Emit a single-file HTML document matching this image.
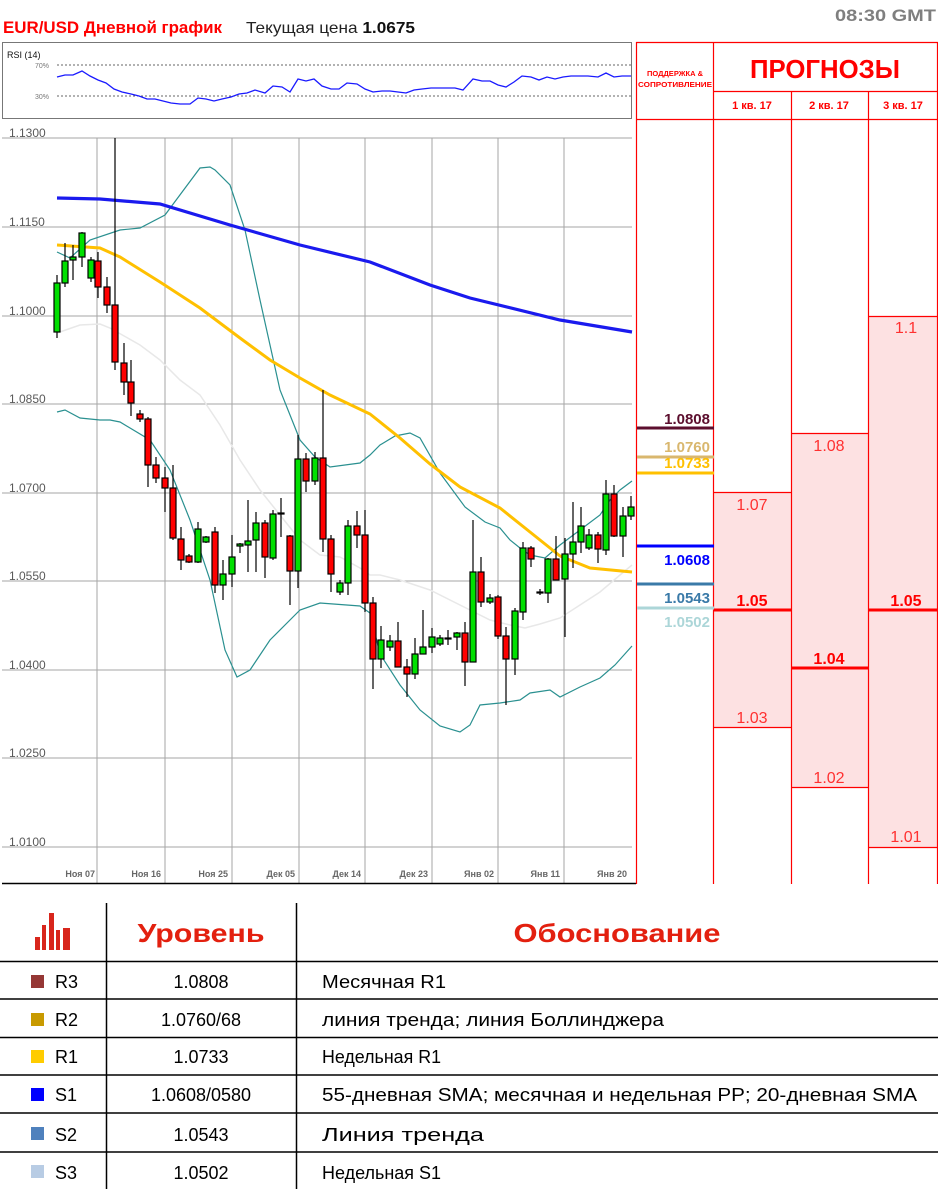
<!DOCTYPE html>
<html><head><meta charset="utf-8"><style>
html,body{margin:0;padding:0;background:#fff;}
svg{display:block;font-family:"Liberation Sans","DejaVu Sans",sans-serif;}
</style></head><body>
<svg width="938" height="1189" viewBox="0 0 938 1189" xmlns="http://www.w3.org/2000/svg">
<rect width="938" height="1189" fill="#fff"/>
<!-- header -->
<text x="3" y="33" font-size="17" font-weight="bold" fill="#ff0000" textLength="219" lengthAdjust="spacingAndGlyphs">EUR/USD Дневной график</text>
<text x="246" y="33" font-size="16" fill="#222" textLength="169" lengthAdjust="spacingAndGlyphs">Текущая цена <tspan font-weight="bold" fill="#111">1.0675</tspan></text>
<text x="936" y="21" font-size="17" font-weight="bold" fill="#7f7f7f" text-anchor="end" textLength="101" lengthAdjust="spacingAndGlyphs">08:30 GMT</text>

<!-- RSI -->
<rect x="2.5" y="42.5" width="629" height="76" fill="#fff" stroke="#777" stroke-width="1"/>
<text x="7" y="58" font-size="9" fill="#111">RSI (14)</text>
<text x="35" y="68" font-size="7" fill="#777">70%</text>
<text x="35" y="99" font-size="7" fill="#777">30%</text>
<line x1="57" y1="65" x2="631" y2="65" stroke="#666" stroke-dasharray="2,2"/>
<line x1="57" y1="96" x2="631" y2="96" stroke="#666" stroke-dasharray="2,2"/>
<polyline fill="none" stroke="#1a1aff" stroke-width="1.3" points="57,77 65,75 73,75 82,71 90,76 98,80 106,83 114,89 122,92 131,94 139,96 147,99 155,99 163,101 171,103 180,104 190,104 198,98 206,99 214,101 222,99 231,97 239,94 247,93 255,90 265,93 273,86 282,87 290,92 298,79 306,81 314,79 322,86 331,89 339,89 347,83 357,84 365,89 373,92 382,91 390,91 398,92 406,93 414,90 422,89 431,88 439,88 447,88 455,88 463,90 473,79 482,81 490,81 498,85 506,87 514,82 522,76 531,77 539,80 547,77 555,79 563,77 571,76 580,76 588,76 598,77 606,73 614,77 622,76 631,76"/>

<!-- main chart grid -->
<g stroke="#a6a6a6" stroke-width="1">
<line x1="2" y1="138" x2="632" y2="138"/><line x1="2" y1="227" x2="632" y2="227"/><line x1="2" y1="316" x2="632" y2="316"/><line x1="2" y1="404" x2="632" y2="404"/><line x1="2" y1="493" x2="632" y2="493"/><line x1="2" y1="581" x2="632" y2="581"/><line x1="2" y1="670" x2="632" y2="670"/><line x1="2" y1="758" x2="632" y2="758"/><line x1="2" y1="847" x2="632" y2="847"/>
<line x1="97" y1="138" x2="97" y2="883"/><line x1="165" y1="138" x2="165" y2="883"/><line x1="232" y1="138" x2="232" y2="883"/><line x1="299" y1="138" x2="299" y2="883"/><line x1="365" y1="138" x2="365" y2="883"/><line x1="432" y1="138" x2="432" y2="883"/><line x1="498" y1="138" x2="498" y2="883"/><line x1="564" y1="138" x2="564" y2="883"/>
</g>
<line x1="2" y1="883.5" x2="636" y2="883.5" stroke="#000" stroke-width="1.5"/>
<g font-size="12" fill="#595959">
<text x="9" y="137">1.1300</text><text x="9" y="226">1.1150</text><text x="9" y="315">1.1000</text><text x="9" y="403">1.0850</text><text x="9" y="492">1.0700</text><text x="9" y="580">1.0550</text><text x="9" y="669">1.0400</text><text x="9" y="757">1.0250</text><text x="9" y="846">1.0100</text>
</g>
<g font-size="9" font-weight="bold" fill="#666" text-anchor="end">
<text x="95" y="877">Ноя 07</text><text x="161" y="877">Ноя 16</text><text x="228" y="877">Ноя 25</text><text x="295" y="877">Дек 05</text><text x="361" y="877">Дек 14</text><text x="428" y="877">Дек 23</text><text x="494" y="877">Янв 02</text><text x="560" y="877">Янв 11</text><text x="627" y="877">Янв 20</text>
</g>

<!-- indicators -->
<polyline fill="none" stroke="#e8e8e8" stroke-width="1.5" points="57,333 80,325 100,324 110,328 140,345 160,360 180,380 200,395 220,425 240,460 260,490 280,515 300,540 320,555 340,557 360,568 370,575 380,575 400,580 430,590 460,605 490,620 510,625 525,628 540,624 560,618 580,605 600,592 620,575 632,565"/>
<polyline fill="none" stroke="#2a9090" stroke-width="1.2" points="57,252 70,258 90,240 120,230 140,228 165,215 200,168 210,167 215,170 230,185 245,230 260,300 280,390 300,440 315,457 330,467 360,463 370,455 380,445 395,436 410,433 420,438 440,473 465,507 485,522 500,528 510,540 520,548 530,555 545,558 560,545 580,530 600,515 610,500 620,490 632,481"/>
<polyline fill="none" stroke="#2a9090" stroke-width="1.2" points="57,412 65,410 80,418 100,420 110,420 120,422 150,440 170,470 190,520 210,580 225,650 237,677 250,670 270,640 300,610 320,603 360,606 370,613 380,654 400,685 420,710 440,726 460,732 470,725 480,705 500,703 520,700 530,693 550,690 560,697 580,687 600,678 615,665 632,646"/>
<polyline fill="none" stroke="#1a1aee" stroke-width="3.2" points="57,198 100,199 160,204 230,225 300,245 370,262 430,285 470,298 560,320 632,332"/>
<polyline fill="none" stroke="#ffc000" stroke-width="3" points="57,245 100,248 120,257 160,282 200,308 240,338 270,360 300,378 330,395 370,414 400,438 430,464 460,487 500,508 530,532 560,556 590,568 632,572"/>

<!-- candles -->
<g stroke="#000" stroke-width="1.2">
<line x1="57" y1="275" x2="57" y2="338"/><rect x="54" y="283" width="6" height="49" fill="#00e000"/>
<line x1="65" y1="243" x2="65" y2="287"/><rect x="62" y="261" width="6" height="22" fill="#00e000"/>
<line x1="73" y1="245" x2="73" y2="280"/><rect x="70" y="257" width="6" height="3" fill="#00e000"/>
<line x1="82" y1="232" x2="82" y2="267"/><rect x="79" y="233" width="6" height="24" fill="#00e000"/>
<line x1="91" y1="257" x2="91" y2="282"/><rect x="88" y="260" width="6" height="18" fill="#00e000"/>
<line x1="98" y1="252" x2="98" y2="298"/><rect x="95" y="261" width="6" height="26" fill="#ff0000"/>
<line x1="107" y1="277" x2="107" y2="313"/><rect x="104" y="287" width="6" height="18" fill="#ff0000"/>
<line x1="115" y1="138" x2="115" y2="370"/><rect x="112" y="305" width="6" height="57" fill="#ff0000"/>
<line x1="124" y1="343" x2="124" y2="395"/><rect x="121" y="363" width="6" height="19" fill="#ff0000"/>
<line x1="131" y1="360" x2="131" y2="416"/><rect x="128" y="382" width="6" height="21" fill="#ff0000"/>
<line x1="140" y1="410" x2="140" y2="422"/><rect x="137" y="414" width="6" height="5" fill="#ff0000"/>
<line x1="148" y1="417" x2="148" y2="487"/><rect x="145" y="419" width="6" height="46" fill="#ff0000"/>
<line x1="156" y1="457" x2="156" y2="483"/><rect x="153" y="465" width="6" height="13" fill="#ff0000"/>
<line x1="165" y1="467" x2="165" y2="512"/><rect x="162" y="478" width="6" height="10" fill="#ff0000"/>
<line x1="173" y1="465" x2="173" y2="540"/><rect x="170" y="488" width="6" height="50" fill="#ff0000"/>
<line x1="181" y1="527" x2="181" y2="570"/><rect x="178" y="539" width="6" height="21" fill="#ff0000"/>
<line x1="189" y1="554" x2="189" y2="563"/><rect x="186" y="556" width="6" height="6" fill="#ff0000"/>
<line x1="198" y1="522" x2="198" y2="563"/><rect x="195" y="529" width="6" height="33" fill="#00e000"/>
<line x1="206" y1="536" x2="206" y2="543"/><rect x="203" y="537" width="6" height="5" fill="#00e000"/>
<line x1="215" y1="527" x2="215" y2="593"/><rect x="212" y="532" width="6" height="53" fill="#ff0000"/>
<line x1="223" y1="560" x2="223" y2="600"/><rect x="220" y="574" width="6" height="11" fill="#00e000"/>
<line x1="232" y1="535" x2="232" y2="587"/><rect x="229" y="557" width="6" height="17" fill="#00e000"/>
<line x1="240" y1="543" x2="240" y2="553"/><rect x="237" y="544" width="6" height="2" fill="#00e000"/>
<line x1="248" y1="500" x2="248" y2="572"/><rect x="245" y="541" width="6" height="4" fill="#00e000"/>
<line x1="256" y1="512" x2="256" y2="572"/><rect x="253" y="523" width="6" height="17" fill="#00e000"/>
<line x1="265" y1="520" x2="265" y2="578"/><rect x="262" y="523" width="6" height="34" fill="#ff0000"/>
<line x1="273" y1="510" x2="273" y2="560"/><rect x="270" y="514" width="6" height="44" fill="#00e000"/>
<line x1="281" y1="498" x2="281" y2="537"/><rect x="278" y="513" width="6" height="1" fill="#00e000"/>
<line x1="290" y1="535" x2="290" y2="605"/><rect x="287" y="536" width="6" height="35" fill="#ff0000"/>
<line x1="298" y1="435" x2="298" y2="588"/><rect x="295" y="459" width="6" height="112" fill="#00e000"/>
<line x1="306" y1="453" x2="306" y2="492"/><rect x="303" y="459" width="6" height="22" fill="#ff0000"/>
<line x1="315" y1="452" x2="315" y2="485"/><rect x="312" y="458" width="6" height="23" fill="#00e000"/>
<line x1="323" y1="390" x2="323" y2="552"/><rect x="320" y="458" width="6" height="81" fill="#ff0000"/>
<line x1="331" y1="535" x2="331" y2="592"/><rect x="328" y="539" width="6" height="35" fill="#ff0000"/>
<line x1="340" y1="580" x2="340" y2="595"/><rect x="337" y="583" width="6" height="9" fill="#00e000"/>
<line x1="348" y1="520" x2="348" y2="595"/><rect x="345" y="526" width="6" height="57" fill="#00e000"/>
<line x1="357" y1="511" x2="357" y2="548"/><rect x="354" y="526" width="6" height="9" fill="#ff0000"/>
<line x1="365" y1="510" x2="365" y2="612"/><rect x="362" y="535" width="6" height="68" fill="#ff0000"/>
<line x1="373" y1="597" x2="373" y2="689"/><rect x="370" y="603" width="6" height="56" fill="#ff0000"/>
<line x1="381" y1="626" x2="381" y2="668"/><rect x="378" y="640" width="6" height="19" fill="#00e000"/>
<line x1="390" y1="635" x2="390" y2="651"/><rect x="387" y="641" width="6" height="6" fill="#00e000"/>
<line x1="398" y1="622" x2="398" y2="667"/><rect x="395" y="641" width="6" height="26" fill="#ff0000"/>
<line x1="407" y1="659" x2="407" y2="697"/><rect x="404" y="667" width="6" height="7" fill="#ff0000"/>
<line x1="415" y1="638" x2="415" y2="679"/><rect x="412" y="654" width="6" height="20" fill="#00e000"/>
<line x1="423" y1="610" x2="423" y2="653"/><rect x="420" y="647" width="6" height="7" fill="#00e000"/>
<line x1="432" y1="628" x2="432" y2="653"/><rect x="429" y="637" width="6" height="10" fill="#00e000"/>
<line x1="440" y1="635" x2="440" y2="646"/><rect x="437" y="638" width="6" height="6" fill="#00e000"/>
<line x1="448" y1="630" x2="448" y2="645"/><rect x="445" y="638" width="6" height="1" fill="#00e000"/>
<line x1="457" y1="632" x2="457" y2="650"/><rect x="454" y="633" width="6" height="4" fill="#00e000"/>
<line x1="465" y1="622" x2="465" y2="686"/><rect x="462" y="633" width="6" height="29" fill="#ff0000"/>
<line x1="473" y1="520" x2="473" y2="662"/><rect x="470" y="572" width="6" height="90" fill="#00e000"/>
<line x1="481" y1="557" x2="481" y2="607"/><rect x="478" y="572" width="6" height="30" fill="#ff0000"/>
<line x1="490" y1="594" x2="490" y2="604"/><rect x="487" y="598" width="6" height="4" fill="#00e000"/>
<line x1="498" y1="595" x2="498" y2="639"/><rect x="495" y="597" width="6" height="39" fill="#ff0000"/>
<line x1="506" y1="627" x2="506" y2="705"/><rect x="503" y="636" width="6" height="23" fill="#ff0000"/>
<line x1="515" y1="608" x2="515" y2="675"/><rect x="512" y="611" width="6" height="48" fill="#00e000"/>
<line x1="523" y1="542" x2="523" y2="620"/><rect x="520" y="548" width="6" height="64" fill="#00e000"/>
<line x1="531" y1="546" x2="531" y2="567"/><rect x="528" y="548" width="6" height="11" fill="#ff0000"/>
<line x1="540" y1="589" x2="540" y2="595"/><rect x="537" y="592" width="6" height="1" fill="#00e000"/>
<line x1="548" y1="558" x2="548" y2="603"/><rect x="545" y="559" width="6" height="34" fill="#00e000"/>
<line x1="556" y1="536" x2="556" y2="580"/><rect x="553" y="559" width="6" height="21" fill="#ff0000"/>
<line x1="565" y1="538" x2="565" y2="637"/><rect x="562" y="554" width="6" height="25" fill="#00e000"/>
<line x1="573" y1="502" x2="573" y2="568"/><rect x="570" y="542" width="6" height="12" fill="#00e000"/>
<line x1="581" y1="507" x2="581" y2="553"/><rect x="578" y="526" width="6" height="16" fill="#00e000"/>
<line x1="589" y1="529" x2="589" y2="550"/><rect x="586" y="535" width="6" height="13" fill="#00e000"/>
<line x1="598" y1="532" x2="598" y2="563"/><rect x="595" y="535" width="6" height="14" fill="#ff0000"/>
<line x1="606" y1="480" x2="606" y2="555"/><rect x="603" y="494" width="6" height="56" fill="#00e000"/>
<line x1="614" y1="485" x2="614" y2="537"/><rect x="611" y="494" width="6" height="42" fill="#ff0000"/>
<line x1="623" y1="507" x2="623" y2="557"/><rect x="620" y="516" width="6" height="20" fill="#00e000"/>
<line x1="631" y1="496" x2="631" y2="520"/><rect x="628" y="507" width="6" height="9" fill="#00e000"/>
</g>

<!-- right forecast panel -->
<rect x="714" y="492" width="77" height="235" fill="#fde1e2"/>
<rect x="791" y="433" width="77" height="354" fill="#fde1e2"/>
<rect x="868" y="316" width="70" height="531" fill="#fde1e2"/>
<g stroke="#ff0000" stroke-width="1.2">
<line x1="636" y1="42.5" x2="938" y2="42.5"/>
<line x1="713" y1="91.5" x2="938" y2="91.5"/>
<line x1="636" y1="119.5" x2="938" y2="119.5"/>
<line x1="636.5" y1="42" x2="636.5" y2="884"/>
<line x1="713.5" y1="42" x2="713.5" y2="884"/>
<line x1="791.5" y1="91" x2="791.5" y2="884"/>
<line x1="868.5" y1="91" x2="868.5" y2="884"/>
<line x1="937.5" y1="42" x2="937.5" y2="884"/>
<line x1="714" y1="492.5" x2="791" y2="492.5"/>
<line x1="714" y1="727.5" x2="791" y2="727.5"/>
<line x1="791" y1="433.5" x2="868" y2="433.5"/>
<line x1="791" y1="787.5" x2="868" y2="787.5"/>
<line x1="868" y1="316.5" x2="938" y2="316.5"/>
<line x1="868" y1="847.5" x2="938" y2="847.5"/>
</g>
<g stroke="#ff0000" stroke-width="3">
<line x1="714" y1="610" x2="791" y2="610"/>
<line x1="791" y1="668" x2="868" y2="668"/>
<line x1="868" y1="610" x2="938" y2="610"/>
</g>
<text x="825" y="78" font-size="26" font-weight="bold" fill="#ff0000" text-anchor="middle" textLength="150" lengthAdjust="spacingAndGlyphs">ПРОГНОЗЫ</text>
<text x="675" y="76" font-size="7.5" font-weight="bold" fill="#ff0000" text-anchor="middle">ПОДДЕРЖКА &amp;</text>
<text x="675" y="87" font-size="7.5" font-weight="bold" fill="#ff0000" text-anchor="middle" textLength="74" lengthAdjust="spacingAndGlyphs">СОПРОТИВЛЕНИЕ</text>
<g font-size="11" font-weight="bold" fill="#ff0000" text-anchor="middle">
<text x="752" y="109">1 кв. 17</text><text x="829" y="109">2 кв. 17</text><text x="903" y="109">3 кв. 17</text>
</g>
<g font-size="16" fill="#ff3030" text-anchor="middle">
<text x="752" y="510">1.07</text><text x="752" y="723">1.03</text>
<text x="829" y="451">1.08</text><text x="829" y="783">1.02</text>
<text x="906" y="333">1.1</text><text x="906" y="842">1.01</text>
</g>
<g font-size="16" font-weight="bold" fill="#ff0000" text-anchor="middle">
<text x="752" y="606">1.05</text><text x="829" y="664">1.04</text><text x="906" y="606">1.05</text>
</g>
<!-- S/R levels -->
<g stroke-width="3">
<line x1="637" y1="428" x2="714" y2="428" stroke="#5c0f2e"/>
<line x1="637" y1="457" x2="714" y2="457" stroke="#d9b76e"/>
<line x1="637" y1="473" x2="714" y2="473" stroke="#ffc000"/>
<line x1="637" y1="546" x2="714" y2="546" stroke="#0000ff"/>
<line x1="637" y1="584" x2="714" y2="584" stroke="#3a7aa8"/>
<line x1="637" y1="608" x2="714" y2="608" stroke="#acd6d8"/>
</g>
<g font-size="15" font-weight="bold" text-anchor="end">
<text x="710" y="424" fill="#5c0f2e">1.0808</text>
<text x="710" y="452" fill="#d9b76e">1.0760</text>
<text x="710" y="468" fill="#ffc000">1.0733</text>
<text x="710" y="565" fill="#0000ff">1.0608</text>
<text x="710" y="603" fill="#3a7aa8">1.0543</text>
<text x="710" y="627" fill="#acd6d8">1.0502</text>
</g>

<!-- bottom table -->
<g fill="#d8261c">
<rect x="35" y="937" width="5" height="13"/><rect x="42" y="925" width="4" height="25"/><rect x="49" y="913" width="5" height="37"/><rect x="56" y="930" width="4" height="20"/><rect x="63" y="928" width="7" height="22"/>
</g>
<text x="201" y="942" font-size="26" font-weight="bold" fill="#e3200f" text-anchor="middle" textLength="127" lengthAdjust="spacingAndGlyphs">Уровень</text>
<text x="617" y="942" font-size="26" font-weight="bold" fill="#e3200f" text-anchor="middle" textLength="207" lengthAdjust="spacingAndGlyphs">Обоснование</text>
<g stroke="#000" stroke-width="1.5">
<line x1="106.5" y1="903" x2="106.5" y2="1189"/>
<line x1="296.5" y1="903" x2="296.5" y2="1189"/>
<line x1="0" y1="961.5" x2="938" y2="961.5"/>
<line x1="0" y1="999" x2="938" y2="999"/>
<line x1="0" y1="1037.5" x2="938" y2="1037.5"/>
<line x1="0" y1="1075" x2="938" y2="1075"/>
<line x1="0" y1="1113" x2="938" y2="1113"/>
<line x1="0" y1="1152" x2="938" y2="1152"/>
</g>
<rect x="31" y="975" width="13" height="13" fill="#953735"/>
<rect x="31" y="1013" width="13" height="13" fill="#c89a00"/>
<rect x="31" y="1050" width="13" height="13" fill="#ffcc00"/>
<rect x="31" y="1088" width="13" height="13" fill="#0000ff"/>
<rect x="31" y="1127" width="13" height="13" fill="#4f81bd"/>
<rect x="31" y="1165" width="13" height="13" fill="#b8cce4"/>
<g font-size="18" fill="#000">
<text x="55" y="988">R3</text><text x="55" y="1026">R2</text><text x="55" y="1063">R1</text><text x="55" y="1101">S1</text><text x="55" y="1141">S2</text><text x="55" y="1179">S3</text>
</g>
<g font-size="18" fill="#000" text-anchor="middle">
<text x="201" y="988">1.0808</text><text x="201" y="1026">1.0760/68</text><text x="201" y="1063">1.0733</text><text x="201" y="1101">1.0608/0580</text><text x="201" y="1141">1.0543</text><text x="201" y="1179">1.0502</text>
</g>
<g font-size="18" fill="#000">
<text x="322" y="988" textLength="124" lengthAdjust="spacingAndGlyphs">Месячная R1</text>
<text x="322" y="1026" textLength="342" lengthAdjust="spacingAndGlyphs">линия тренда; линия Боллинджера</text>
<text x="322" y="1063" textLength="119" lengthAdjust="spacingAndGlyphs">Недельная R1</text>
<text x="322" y="1101" textLength="595" lengthAdjust="spacingAndGlyphs">55-дневная SMA; месячная  и недельная PP; 20-дневная SMA</text>
<text x="322" y="1141" textLength="162" lengthAdjust="spacingAndGlyphs">Линия тренда</text>
<text x="322" y="1179" textLength="119" lengthAdjust="spacingAndGlyphs">Недельная S1</text>
</g>
</svg>
</body></html>
